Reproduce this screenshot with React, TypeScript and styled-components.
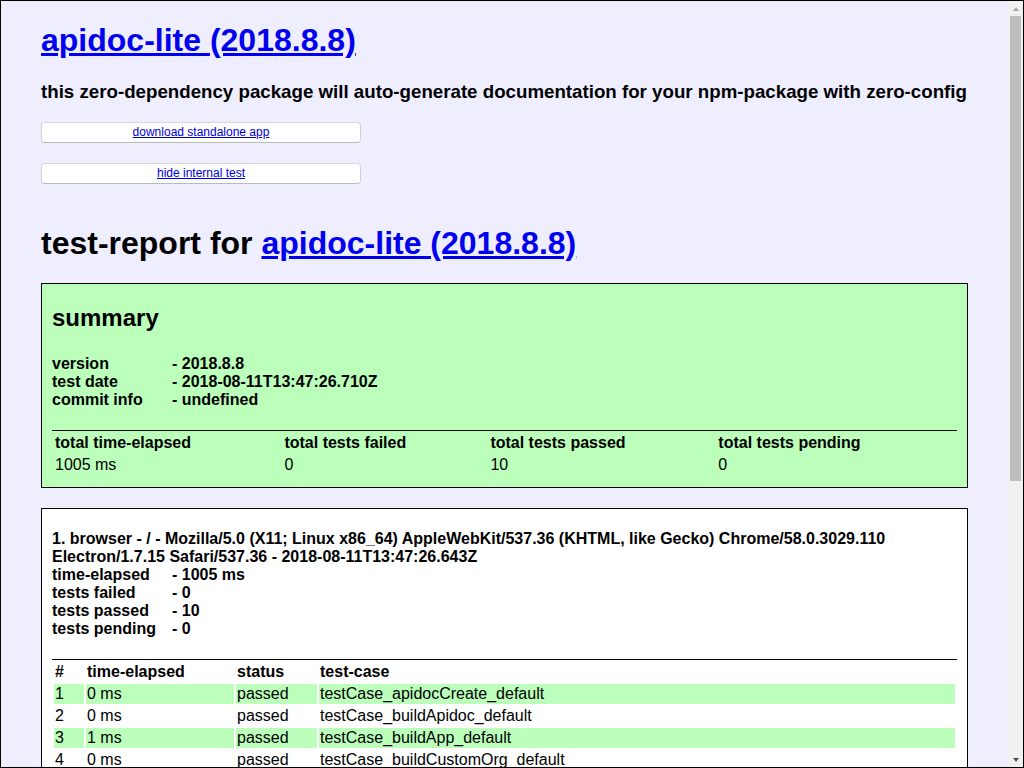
import React from "react";
import styled, { createGlobalStyle } from "styled-components";

const Global = createGlobalStyle`
  *, *::before, *::after { box-sizing: border-box; }
  html, body { margin: 0; padding: 0; overflow: hidden; }
  body { background: #eef; }
`;

const Frame = styled.div`
  width: 1024px;
  height: 768px;
  border: 1px solid #000;
  display: flex;
  background: #eef;
  font-family: "Liberation Sans", Arial, Helvetica, sans-serif;
  color: #000;
`;

const Viewport = styled.div`
  flex: 1;
  min-width: 0;
  overflow: hidden;
  display: flow-root;
`;

const ScrollBar = styled.div`
  width: 15px;
  flex: none;
  display: flex;
  flex-direction: column;
  background: #f1f1f1;
`;

const ScrollButton = styled.div`
  height: 15px;
  flex: none;
  display: flex;
  align-items: center;
  justify-content: center;
`;

const Arrow = styled.div<{ $down?: boolean; $color: string }>`
  width: 0;
  height: 0;
  border-left: 3.5px solid transparent;
  border-right: 3.5px solid transparent;
  ${(p) =>
    p.$down
      ? `border-top: 4px solid ${p.$color};`
      : `border-bottom: 4px solid ${p.$color};`}
`;

const Track = styled.div`
  flex: 1;
  padding: 0 2px;
`;

const Thumb = styled.div`
  height: 465px;
  background: #bdbdbd;
`;

const Page = styled.div`
  margin: 0 40px;
`;

const Title = styled.h1`
  font-size: 32px;
  font-weight: bold;
  margin: 21.44px 0;
`;

const TitleLink = styled.a`
  color: #00e;
  text-decoration: underline;
`;

const Description = styled.h3`
  font-size: 18.72px;
  font-weight: bold;
  margin: 18.72px 0;
`;

const ButtonLink = styled.a`
  display: block;
  width: 320px;
  margin-bottom: 20px;
  background-color: #fff;
  border: 1px solid;
  border-bottom-color: rgb(186, 186, 186);
  border-left-color: rgb(209, 209, 209);
  border-right-color: rgb(209, 209, 209);
  border-top-color: rgb(216, 216, 216);
  border-radius: 4px;
  color: #00d;
  font-size: 12px;
  line-height: 14px;
  padding: 2px 7px 3px 7px;
  text-align: center;
  text-decoration: underline;
  cursor: pointer;
`;

const ReportDiv = styled.div`
  display: flow-root;
`;

const ReportTitle = styled.h1`
  font-size: 32px;
  font-weight: bold;
  margin: 21.44px 0;
`;

const Platform = styled.div<{ $summary?: boolean }>`
  background: ${(p) => (p.$summary ? "#bfb" : "#fff")};
  border: 1px solid #000;
  margin-bottom: 20px;
  padding: 0 10px 10px 10px;
  text-align: left;
`;

const SummaryHeading = styled.h2`
  font-size: 24px;
  font-weight: bold;
  margin: 19.92px 0;
`;

const InfoBlock = styled.h4<{ $top?: number }>`
  font-size: 16px;
  font-weight: bold;
  margin: ${(p) => p.$top ?? 21.28}px 0 21.28px 0;
`;

const Label = styled.span`
  display: inline-block;
  width: 120px;
`;

const Table = styled.table`
  border-top: 1px solid #000;
  border-spacing: 2px;
  text-align: left;
  width: 100%;
  font-size: 16px;
`;

const Th = styled.th<{ $width?: number }>`
  padding: 1px;
  font-weight: bold;
  text-align: left;
  ${(p) => (p.$width ? `width: ${p.$width}px;` : "")}
`;

const Row = styled.tr<{ $odd?: boolean }>`
  background: ${(p) => (p.$odd ? "#bfb" : "transparent")};
`;

const Td = styled.td`
  padding: 1px;
`;

const Footer = styled.div`
  text-align: center;
  margin-bottom: 20px;
`;

const FooterLink = styled.a`
  color: #00e;
`;

const summaryInfo = [
  ["version", "2018.8.8"],
  ["test date", "2018-08-11T13:47:26.710Z"],
  ["commit info", "undefined"],
];

const platformInfo = [
  ["time-elapsed", "1005 ms"],
  ["tests failed", "0"],
  ["tests passed", "10"],
  ["tests pending", "0"],
];

const testCases = [
  ["0 ms", "testCase_apidocCreate_default"],
  ["0 ms", "testCase_buildApidoc_default"],
  ["1 ms", "testCase_buildApp_default"],
  ["0 ms", "testCase_buildCustomOrg_default"],
  ["1 ms", "testCase_buildReadme_default"],
  ["0 ms", "testCase_buildTest_default"],
  ["2 ms", "testCase_webpage_default"],
  ["0 ms", "testCase_apidocCreate_fileNotFound"],
  ["1 ms", "testCase_apidocCreate_moduleInvalid"],
  ["1000 ms", "testCase_browserTest_default"],
];

export default function App() {
  return (
    <>
      <Global />
      <Frame>
        <Viewport>
          <Page>
            <Title>
              <TitleLink href="#">apidoc-lite (2018.8.8)</TitleLink>
            </Title>
            <Description>
              this zero-dependency package will auto-generate documentation for your npm-package with zero-config
            </Description>
            <ButtonLink href="#">download standalone app</ButtonLink>
            <ButtonLink href="#">hide internal test</ButtonLink>

            <ReportDiv>
              <ReportTitle>
                test-report for <TitleLink href="#">apidoc-lite (2018.8.8)</TitleLink>
              </ReportTitle>

              <Platform $summary>
                <SummaryHeading>summary</SummaryHeading>
                <InfoBlock $top={22.3}>
                  {summaryInfo.map(([k, v]) => (
                    <React.Fragment key={k}>
                      <Label>{k}</Label>- {v}
                      <br />
                    </React.Fragment>
                  ))}
                </InfoBlock>
                <Table>
                  <thead>
                    <tr>
                      <Th>total time-elapsed</Th>
                      <Th>total tests failed</Th>
                      <Th>total tests passed</Th>
                      <Th>total tests pending</Th>
                    </tr>
                  </thead>
                  <tbody>
                    <Row $odd>
                      <Td>1005 ms</Td>
                      <Td>0</Td>
                      <Td>10</Td>
                      <Td>0</Td>
                    </Row>
                  </tbody>
                </Table>
              </Platform>

              <Platform>
                <InfoBlock>
                  1. browser - / - Mozilla/5.0 (X11; Linux x86_64) AppleWebKit/537.36 (KHTML, like Gecko)
                  Chrome/58.0.3029.110 Electron/1.7.15 Safari/537.36 - 2018-08-11T13:47:26.643Z
                  <br />
                  {platformInfo.map(([k, v]) => (
                    <React.Fragment key={k}>
                      <Label>{k}</Label>- {v}
                      <br />
                    </React.Fragment>
                  ))}
                </InfoBlock>
                <Table>
                  <thead>
                    <tr>
                      <Th $width={30}>#</Th>
                      <Th $width={148}>time-elapsed</Th>
                      <Th $width={81}>status</Th>
                      <Th>test-case</Th>
                    </tr>
                  </thead>
                  <tbody>
                    {testCases.map(([t, name], i) => (
                      <Row key={name} $odd={i % 2 === 0}>
                        <Td>{i + 1}</Td>
                        <Td>{t}</Td>
                        <Td>passed</Td>
                        <Td>{name}</Td>
                      </Row>
                    ))}
                  </tbody>
                </Table>
              </Platform>

              <Footer>
                [ this document was created with <FooterLink href="#">utility2</FooterLink> ]
              </Footer>
            </ReportDiv>
          </Page>
        </Viewport>
        <ScrollBar>
          <ScrollButton>
            <Arrow $color="#a3a3a3" />
          </ScrollButton>
          <Track>
            <Thumb />
          </Track>
          <ScrollButton>
            <Arrow $down $color="#505050" />
          </ScrollButton>
        </ScrollBar>
      </Frame>
    </>
  );
}
